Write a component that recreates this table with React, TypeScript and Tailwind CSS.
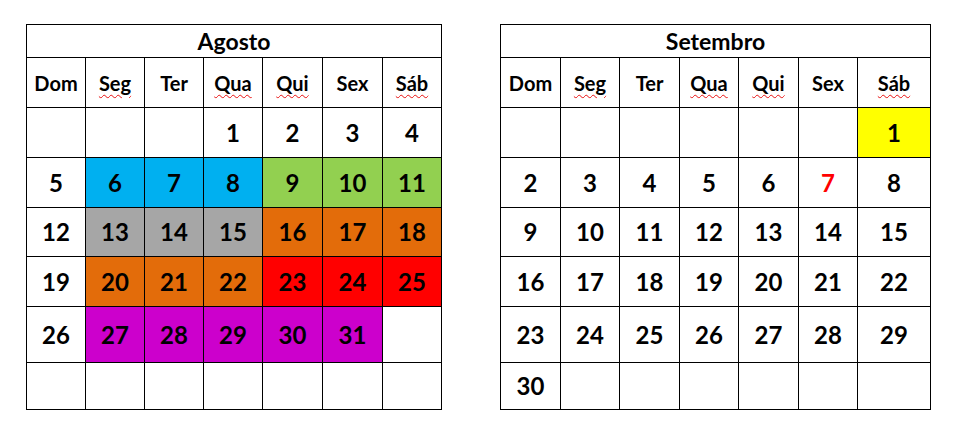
type Cell = { n?: number; bg?: string; red?: boolean };

const FONT = "font-['Lato','Noto_Sans',sans-serif]";

const WEEKDAYS = ["Dom", "Seg", "Ter", "Qua", "Qui", "Sex", "Sáb"];
// Word's spell checker flags these
const FLAGGED = ["Seg", "Qua", "Qui", "Sáb"];

const ROW_HEIGHTS = ["h-[50px]", "h-[50px]", "h-[49px]", "h-[50px]", "h-[56px]", "h-[47px]"];

const blue = "bg-[#00b0f0]";
const green = "bg-[#92d050]";
const gray = "bg-[#a6a6a6]";
const orange = "bg-[#e36c0a]";
const red = "bg-[#ff0000]";
const purple = "bg-[#cc00cc]";
const yellow = "bg-[#ffff00]";

const agosto: Cell[][] = [
  [{}, {}, {}, { n: 1 }, { n: 2 }, { n: 3 }, { n: 4 }],
  [
    { n: 5 },
    { n: 6, bg: blue },
    { n: 7, bg: blue },
    { n: 8, bg: blue },
    { n: 9, bg: green },
    { n: 10, bg: green },
    { n: 11, bg: green },
  ],
  [
    { n: 12 },
    { n: 13, bg: gray },
    { n: 14, bg: gray },
    { n: 15, bg: gray },
    { n: 16, bg: orange },
    { n: 17, bg: orange },
    { n: 18, bg: orange },
  ],
  [
    { n: 19 },
    { n: 20, bg: orange },
    { n: 21, bg: orange },
    { n: 22, bg: orange },
    { n: 23, bg: red },
    { n: 24, bg: red },
    { n: 25, bg: red },
  ],
  [
    { n: 26 },
    { n: 27, bg: purple },
    { n: 28, bg: purple },
    { n: 29, bg: purple },
    { n: 30, bg: purple },
    { n: 31, bg: purple },
    {},
  ],
  [{}, {}, {}, {}, {}, {}, {}],
];

const setembro: Cell[][] = [
  [{}, {}, {}, {}, {}, {}, { n: 1, bg: yellow }],
  [{ n: 2 }, { n: 3 }, { n: 4 }, { n: 5 }, { n: 6 }, { n: 7, red: true }, { n: 8 }],
  [9, 10, 11, 12, 13, 14, 15].map((n) => ({ n })),
  [16, 17, 18, 19, 20, 21, 22].map((n) => ({ n })),
  [23, 24, 25, 26, 27, 28, 29].map((n) => ({ n })),
  [{ n: 30 }, {}, {}, {}, {}, {}, {}],
];

function Calendar({
  title,
  rows,
  cols,
}: {
  title: string;
  rows: Cell[][];
  cols: string;
}) {
  return (
    <div className={`grid ${cols} border-t border-l border-black bg-white text-black`}>
      <div className="col-span-7 flex h-[33px] items-center justify-center border-r border-b border-black text-[23px] font-bold leading-none">
        {title}
      </div>
      {WEEKDAYS.map((d) => (
        <div
          key={d}
          className="flex h-[50px] items-center justify-center border-r border-b border-black text-[20px] font-bold leading-none"
        >
          <span
            className={
              FLAGGED.includes(d)
                ? "underline decoration-wavy decoration-[#e81010] decoration-1 underline-offset-[3px]"
                : ""
            }
          >
            {d}
          </span>
        </div>
      ))}
      {rows.map((row, r) =>
        row.map((c, i) => (
          <div
            key={`${r}-${i}`}
            className={`flex ${ROW_HEIGHTS[r]} items-center justify-center border-r border-b border-black text-[24px] font-bold leading-none ${
              c.bg ?? ""
            } ${c.red ? "text-[#ff0000]" : ""}`}
          >
            {c.n ?? ""}
          </div>
        ))
      )}
    </div>
  );
}

export default function App() {
  return (
    <div className={`flex h-[441px] w-[956px] items-start gap-[58px] bg-white pt-[24px] pl-[26px] ${FONT}`}>
      <Calendar
        title="Agosto"
        rows={agosto}
        cols="grid-cols-[59px_59px_59px_59px_60px_60px_59px] w-[416px]"
      />
      <Calendar
        title="Setembro"
        rows={setembro}
        cols="grid-cols-[60px_59px_60px_59px_60px_59px_73px] w-[431px]"
      />
    </div>
  );
}
